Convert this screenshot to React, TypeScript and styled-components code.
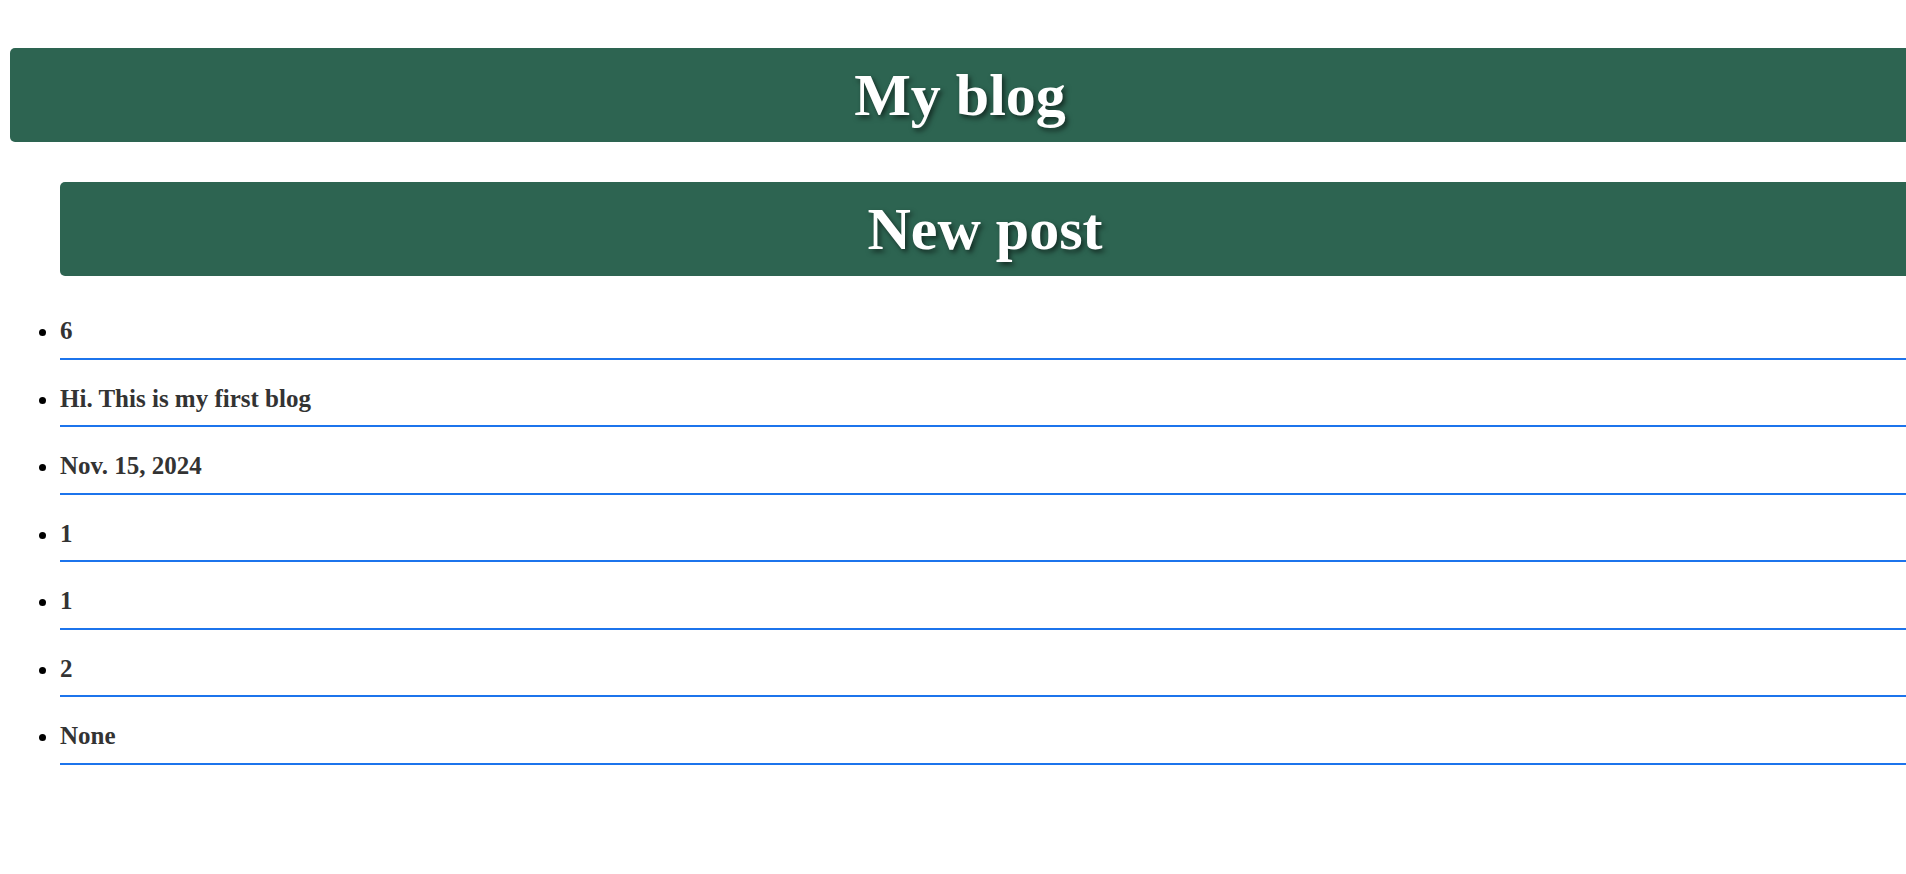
import React from "react";
import styled, { createGlobalStyle } from "styled-components";

const GlobalStyle = createGlobalStyle`
  html, body {
    margin: 0;
    padding: 0;
    background: #ffffff;
    overflow-x: hidden;
  }
  body {
    font-family: "Liberation Serif", "Times New Roman", serif;
  }
`;

const Page = styled.div`
  width: 1900px;
  padding: 48px 0 0 10px;
  font-family: "Liberation Serif", "Times New Roman", serif;
`;

const Banner = styled.h1<{ $indent?: boolean }>`
  margin: 0;
  padding: 12px 0;
  background: #2d6451;
  color: #ffffff;
  border-radius: 5px;
  font-size: 60px;
  line-height: 70px;
  font-weight: bold;
  text-align: center;
  text-shadow: 2.5px 2.5px 5px rgba(0, 0, 0, 0.55);
`;

const Content = styled.div`
  padding-left: 50px;
  margin-top: 40px;
`;

const PostTitle = styled(Banner).attrs({ as: "h2" })`
  margin-bottom: 16px;
`;

const List = styled.ul`
  margin: 0;
  padding: 0;
  list-style: disc outside;
`;

const Item = styled.li`
  padding: 24px 0 12.5px;
  border-bottom: 2px solid #1c74ec;
  color: #000000;
  font-size: 25px;
  line-height: 29px;
  font-weight: bold;
`;

const ItemText = styled.span`
  color: #333333;
`;

const fields = ["6", "Hi. This is my first blog", "Nov. 15, 2024", "1", "1", "2", "None"];

export default function App() {
  return (
    <>
      <GlobalStyle />
      <Page>
        <Banner>My blog</Banner>
        <Content>
          <PostTitle>New post</PostTitle>
          <List>
            {fields.map((f, i) => (
              <Item key={i}>
                <ItemText>{f}</ItemText>
              </Item>
            ))}
          </List>
        </Content>
      </Page>
    </>
  );
}
